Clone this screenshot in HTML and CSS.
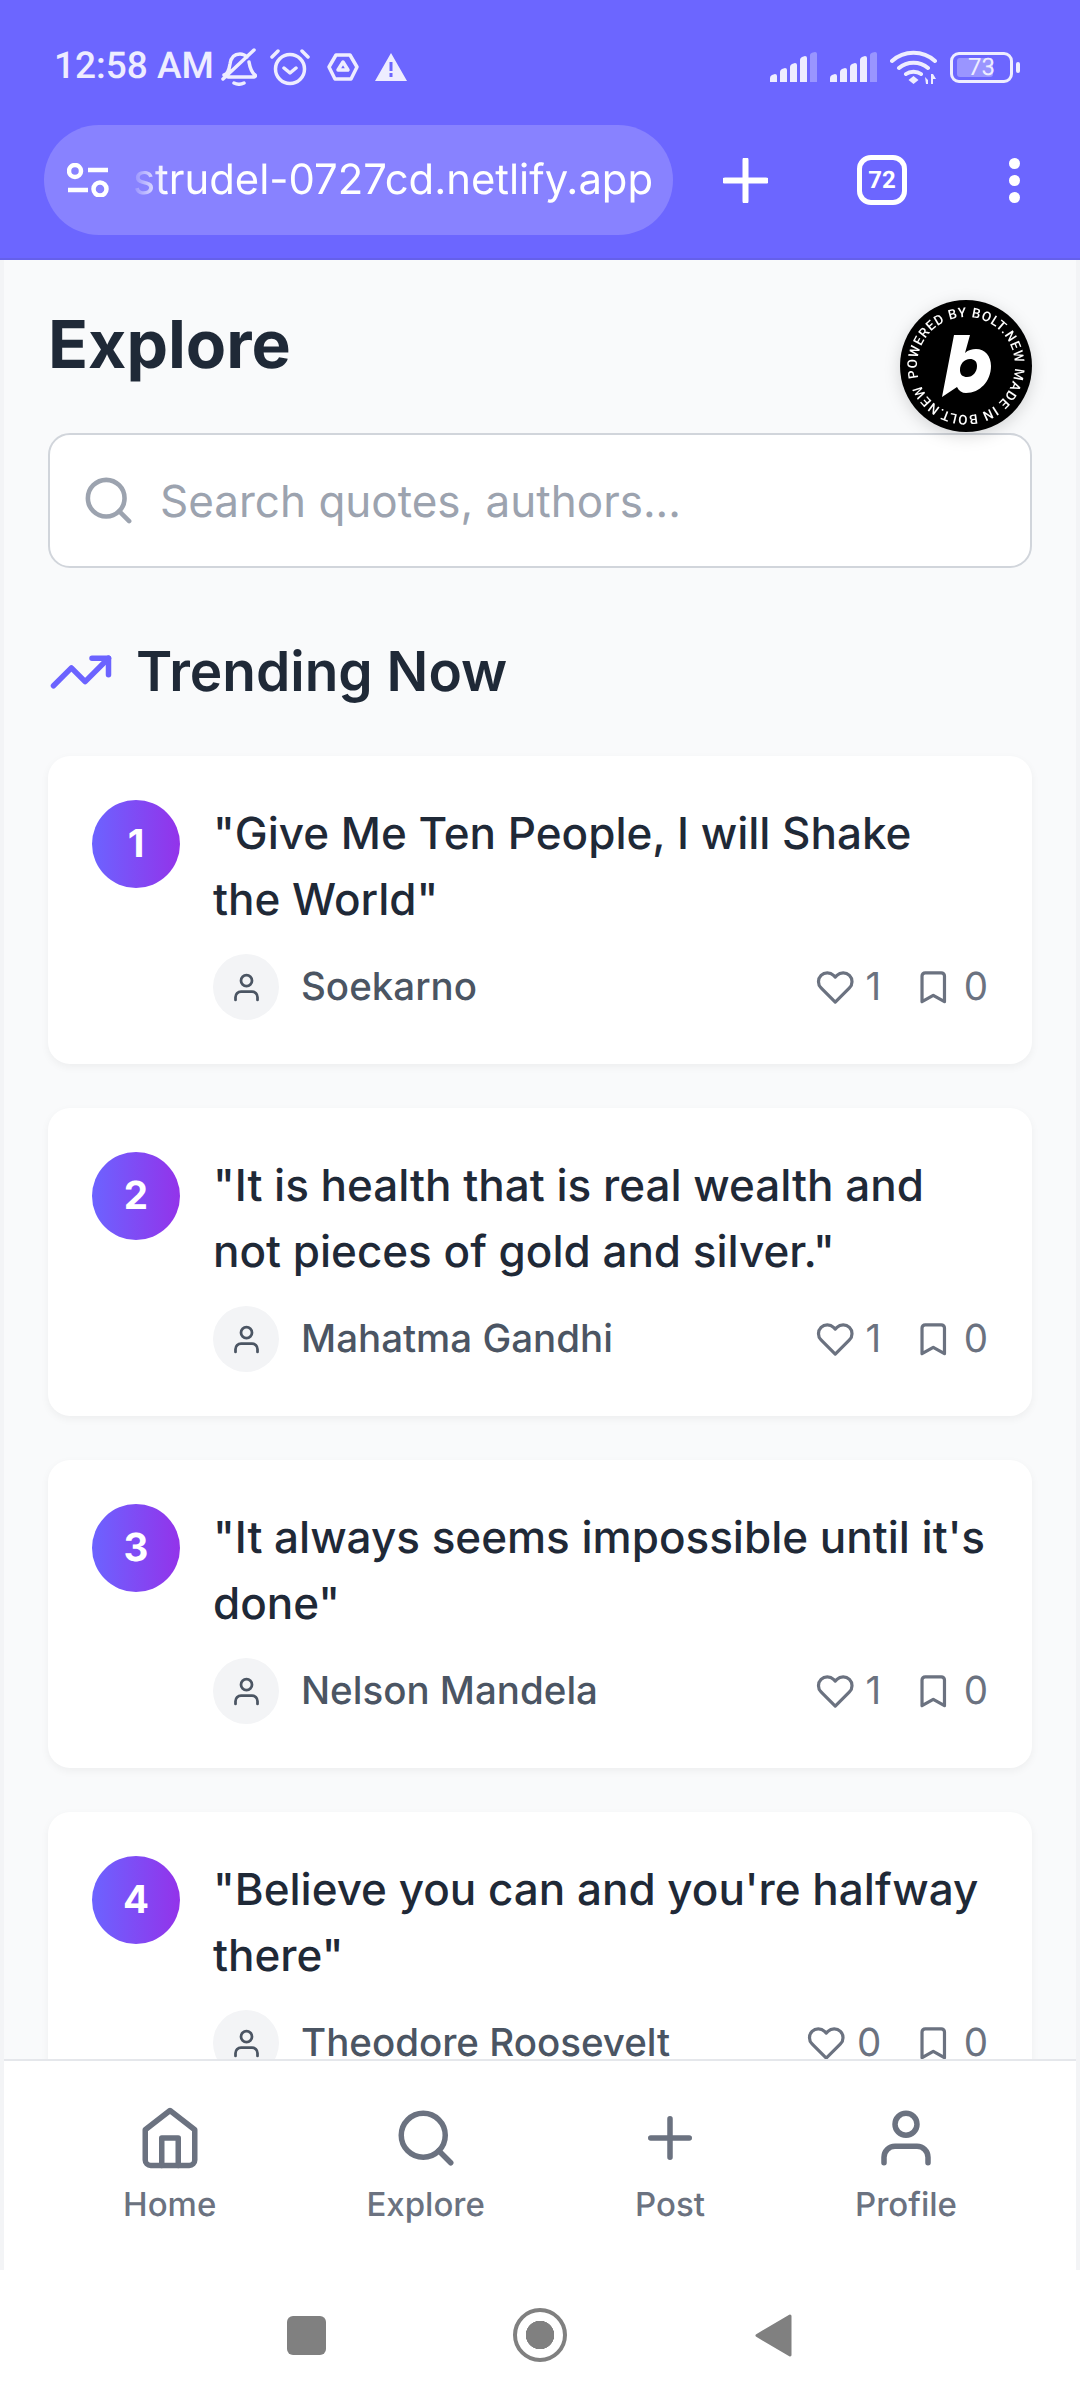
FILE: index.html
```html
<!DOCTYPE html>
<html lang="en">
<head>
<meta charset="utf-8">
<title>Explore</title>
<link rel="stylesheet" href="styles.css">
</head>
<body>
<svg class="defs" width="0" height="0" aria-hidden="true">
  <symbol id="i-heart" viewBox="0 0 24 24"><path d="M20.84 4.61a5.5 5.5 0 0 0-7.78 0L12 5.67l-1.06-1.06a5.5 5.5 0 0 0-7.78 7.78l1.06 1.06L12 21.23l7.78-7.78 1.06-1.06a5.5 5.5 0 0 0 0-7.78z"/></symbol>
  <symbol id="i-bookmark" viewBox="0 0 24 24"><path d="m19 21-7-4-7 4V5a2 2 0 0 1 2-2h10a2 2 0 0 1 2 2v16z"/></symbol>
  <symbol id="i-user" viewBox="0 0 24 24"><path d="M20 21v-2a4 4 0 0 0-4-4H8a4 4 0 0 0-4 4v2"/><circle cx="12" cy="7" r="4"/></symbol>
  <symbol id="i-search" viewBox="0 0 24 24"><circle cx="11" cy="11" r="8"/><path d="m21 21-4.35-4.35"/></symbol>
  <symbol id="i-home" viewBox="0 0 24 24"><path d="m3 9 9-7 9 7v11a2 2 0 0 1-2 2H5a2 2 0 0 1-2-2z"/><path d="M9 22V12h6v10"/></symbol>
  <symbol id="i-plus" viewBox="0 0 24 24"><path d="M12 5v14M5 12h14"/></symbol>
  <symbol id="i-trend" viewBox="0 0 24 24"><path d="M22 7 13.500 15.500l-5-5L2 17"/><path d="M16 7h6v6"/></symbol>
  <symbol id="i-signal" viewBox="0 0 47 30"><path fill="currentColor" d="M0 30V26q0-2 2-3l3-1q2 0 2 2v6zM10 30V20q0-2 2-3l3-1q2 0 2 2v12zM20 30V15q0-2 2-3l3-1q2 0 2 2v17zM30 30V8q0-2 2-3l3-1q2 0 2 2v24z"/><path fill="currentColor" opacity=".35" d="M40 30V3q0-1.500 2-2.300l3-.7q2 0 2 2v28z"/></symbol>
</svg>

<div class="phone">
  <header class="chrome">
    <div class="status">
      <div class="status-left">
        <span class="time">12:58 AM</span>
        <svg class="st st-bell" viewBox="0 0 36 38"><path d="M3 27c4-1 5-5 6-11 1-7 5-10 10-10 3 0 5 1 7 3M28 14c1 6 2 10 6 13 1 1 0 2-1 2H7M13 35c3 1.500 7 1.500 10 0M2 31 33 2"/></svg>
        <svg class="st st-alarm" viewBox="0 0 40 38"><circle cx="20" cy="21" r="14.500"/><path d="m14 20 6 5 6-5M2 9l6-6M38 9l-6-6"/></svg>
        <svg class="st st-drive" viewBox="0 0 32 28"><path d="M9 2h14l7 12-6 12H8L2 14z"/><path d="M16 9l5 8H11z"/></svg>
        <svg class="st st-warn" viewBox="0 0 32 28"><path fill="currentColor" fill-rule="evenodd" stroke="none" d="M16 0 32 28H0zM14.500 9v9h3V9zM14.500 20v4h3v-4z"/></svg>
      </div>
      <div class="status-right">
        <svg class="st-signal"><use href="#i-signal"/></svg>
        <svg class="st-signal"><use href="#i-signal"/></svg>
        <svg class="st st-wifi" viewBox="0 0 47 34"><path d="M2 11c12-11 31-11 43 0M9 18c8-7 21-7 29 0M16 24c4-3 11-3 15 0"/><path fill="currentColor" stroke="none" d="m23.500 26 5 4-5 4-5-4zM35 27l3 3v4h-2zM41 24h2l3 5h-3v5h-2z"/></svg>
        <div class="battery"><div class="batt-body"><span class="batt-fill"></span><span class="batt-num">73</span></div><span class="batt-cap"></span></div>
      </div>
    </div>
    <div class="toolbar">
      <div class="pill">
        <svg class="tune" viewBox="0 0 42 34"><circle cx="8" cy="8" r="6"/><path d="M21 7h20M1 27h20"/><circle cx="33" cy="26" r="6.500"/></svg>
        <div class="url-clip"><span class="url">strudel-0727cd.netlify.app</span></div>
      </div>
      <svg class="tb-plus" viewBox="0 0 45 45"><path d="M22.500 2v41M2 22.500h41"/></svg>
      <div class="tabs"><span>72</span></div>
      <div class="dots"><i></i><i></i><i></i></div>
    </div>
  </header>

  <div class="frame">
    <main class="content">
      <h1 class="title">Explore</h1>
      <div class="search">
        <svg class="ico search-ico"><use href="#i-search"/></svg>
        <span class="placeholder">Search quotes, authors...</span>
      </div>
      <h2 class="section"><svg class="ico trend-ico"><use href="#i-trend"/></svg>Trending Now</h2>
      <div class="list">
        <article class="card">
          <div class="rank">1</div>
          <div class="body">
            <p class="quote">"Give Me Ten People, I will Shake the World"</p>
            <div class="meta">
              <div class="author"><span class="avatar"><svg class="ico user-ico"><use href="#i-user"/></svg></span><span class="name">Soekarno</span></div>
              <div class="stats"><span class="stat"><svg class="ico stat-ico"><use href="#i-heart"/></svg>1</span><span class="stat"><svg class="ico stat-ico"><use href="#i-bookmark"/></svg>0</span></div>
            </div>
          </div>
        </article>
        <article class="card">
          <div class="rank">2</div>
          <div class="body">
            <p class="quote">"It is health that is real wealth and not pieces of gold and silver."</p>
            <div class="meta">
              <div class="author"><span class="avatar"><svg class="ico user-ico"><use href="#i-user"/></svg></span><span class="name">Mahatma Gandhi</span></div>
              <div class="stats"><span class="stat"><svg class="ico stat-ico"><use href="#i-heart"/></svg>1</span><span class="stat"><svg class="ico stat-ico"><use href="#i-bookmark"/></svg>0</span></div>
            </div>
          </div>
        </article>
        <article class="card">
          <div class="rank">3</div>
          <div class="body">
            <p class="quote">"It always seems impossible until it's done"</p>
            <div class="meta">
              <div class="author"><span class="avatar"><svg class="ico user-ico"><use href="#i-user"/></svg></span><span class="name">Nelson Mandela</span></div>
              <div class="stats"><span class="stat"><svg class="ico stat-ico"><use href="#i-heart"/></svg>1</span><span class="stat"><svg class="ico stat-ico"><use href="#i-bookmark"/></svg>0</span></div>
            </div>
          </div>
        </article>
        <article class="card">
          <div class="rank">4</div>
          <div class="body">
            <p class="quote">"Believe you can and you're halfway there"</p>
            <div class="meta">
              <div class="author"><span class="avatar"><svg class="ico user-ico"><use href="#i-user"/></svg></span><span class="name">Theodore Roosevelt</span></div>
              <div class="stats"><span class="stat"><svg class="ico stat-ico"><use href="#i-heart"/></svg>0</span><span class="stat"><svg class="ico stat-ico"><use href="#i-bookmark"/></svg>0</span></div>
            </div>
          </div>
        </article>
      </div>
    </main>
    <nav class="tabbar">
      <div class="tab"><svg class="ico tab-ico"><use href="#i-home"/></svg><span>Home</span></div>
      <div class="tab"><svg class="ico tab-ico"><use href="#i-search"/></svg><span>Explore</span></div>
      <div class="tab"><svg class="ico tab-ico"><use href="#i-plus"/></svg><span>Post</span></div>
      <div class="tab"><svg class="ico tab-ico"><use href="#i-user"/></svg><span>Profile</span></div>
    </nav>
    <svg class="badge" viewBox="0 0 132 132">
      <defs><path id="ring" d="M17 66a49 49 0 1 1 98 0a49 49 0 1 1-98 0" transform="rotate(-14 66 66)"/></defs>
      <circle cx="66" cy="66" r="66" fill="#000"/>
      <text class="badge-text"><textPath href="#ring" textLength="300">POWERED BY BOLT.NEW MADE IN BOLT.NEW</textPath></text>
      <path class="badge-b" fill-rule="evenodd" d="M54 35H70L65 53C68 50 72 49 76 49C85 49 91 56 91 66C91 81 80 93 66 93C62 93 59 91 57 87L42 97ZM70 59C64 59 60 64 60 70C60 75 63 77 67 77C73 77 77 72 77 66C77 61 74 59 70 59Z"/>
    </svg>
  </div>

  <footer class="sysnav">
    <span class="sys-square"></span>
    <span class="sys-home"></span>
    <svg class="sys-back" viewBox="0 0 38 45"><path d="M36 3 3 22.500 36 42z"/></svg>
  </footer>
</div>
</body>
</html>
```

FILE: styles.css
```css
* { box-sizing: border-box; }
html, body { margin: 0; padding: 0; }
body { width: 1080px; height: 2400px; overflow: hidden; background: #fff; font-family: Inter, "Liberation Sans", sans-serif; text-rendering: geometricPrecision; -webkit-font-smoothing: antialiased; }
.defs { position: absolute; }
.phone { width: 1080px; height: 2400px; display: flex; flex-direction: column; }

.chrome { height: 260px; flex: none; background: #6c66ff; border-bottom: 2px solid #6560ea; color: #fff; }
.status { height: 125px; padding: 48px 60px 0 54px; display: flex; justify-content: space-between; align-items: flex-start; color: #eeedff; }
.status-left, .status-right { display: flex; align-items: center; height: 38px; }
.time { font: 500 37px/38px Roboto, sans-serif; width: 167px; white-space: nowrap; }
.st { fill: none; stroke: currentColor; stroke-width: 3.5; stroke-linecap: round; stroke-linejoin: round; }
.st-bell { width: 36px; height: 38px; }
.st-alarm { width: 40px; height: 38px; margin-left: 13px; }
.st-drive { width: 32px; height: 28px; margin-left: 17px; }
.st-warn { width: 32px; height: 28px; margin-left: 16px; }
.st-signal { width: 47px; height: 30px; margin-right: 13px; color: #eeedff; }
.st-wifi { width: 47px; height: 34px; margin-right: 13px; stroke-width: 4; }
.battery { display: flex; align-items: center; gap: 3px; }
.batt-body { position: relative; width: 63px; height: 31px; border: 3px solid #eeedff; border-radius: 9px; display: flex; align-items: center; justify-content: center; }
.batt-fill { position: absolute; left: 4px; top: 3px; bottom: 3px; width: 36px; border-radius: 3px; background: #9a95ff; }
.batt-num { position: relative; font: 400 24px/1 Roboto, sans-serif; }
.batt-cap { width: 4px; height: 11px; background: #eeedff; border-radius: 2px; }

.toolbar { display: flex; align-items: center; height: 110px; padding-left: 44px; }
.pill { width: 629px; height: 110px; border-radius: 55px; background: #8882ff; display: flex; align-items: center; padding-left: 23px; }
.tune { width: 42px; height: 34px; flex: none; fill: none; stroke: #fff; stroke-width: 4.5; }
.url-clip { width: 540px; margin-left: 20px; padding-left: 4px; overflow: hidden; -webkit-mask-image: linear-gradient(to right, transparent 0, #000 36px); mask-image: linear-gradient(to right, transparent 0, #000 36px); }
.url { display: block; font: 400 41.8px/60px Inter, sans-serif; color: #fff; white-space: nowrap; }
.tb-plus { width: 45px; height: 45px; margin-left: 50px; flex: none; fill: none; stroke: #fff; stroke-width: 6; stroke-linecap: round; }
.tabs { width: 50px; height: 50px; margin-left: 89px; border: 5px solid #fff; border-radius: 14px; display: flex; align-items: center; justify-content: center; color: #fff; font: 700 24px/1 Roboto, sans-serif; }
.dots { margin-left: 102px; display: flex; flex-direction: column; gap: 6px; }
.dots i { display: block; width: 11px; height: 11px; border-radius: 50%; background: #fff; }

.frame { position: relative; flex: 1; min-height: 0; display: flex; flex-direction: column; background: #f3f4f6; padding: 0 4px; }
.content { flex: 1; min-height: 0; overflow: hidden; background: #f9fafb; padding: 40px 44px 0; }
.title { margin: 0; font-size: 66px; line-height: 88px; font-weight: 700; color: #1f2937; }
.search { margin-top: 45px; height: 135px; border: 2px solid #d1d5db; border-radius: 22px; background: #fff; display: flex; align-items: center; padding-left: 31px; }
.ico { fill: none; stroke: currentColor; stroke-linecap: round; stroke-linejoin: round; stroke-width: 2; flex: none; }
.search-ico { width: 55px; height: 55px; color: #9ca3af; }
.placeholder { margin-left: 24px; font-size: 44px; color: #9ca3af; }
.section { margin: 71px 0 51px; display: flex; align-items: center; gap: 22px; font-size: 55px; line-height: 60px; font-weight: 600; color: #1f2937; }
.trend-ico { width: 66px; height: 66px; color: #6c63ff; }
.list { display: flex; flex-direction: column; gap: 44px; }
.card { flex: none; height: 308px; padding: 44px; background: #fff; border-radius: 22px; box-shadow: 0 3px 8px rgba(0,0,0,.05); display: flex; gap: 33px; }
.rank { flex: none; width: 88px; height: 88px; border-radius: 50%; background: linear-gradient(to right, #6c63ff, #9333ea); color: #fff; font-size: 38.5px; font-weight: 700; display: flex; align-items: center; justify-content: center; }
.body { flex: 1; min-width: 0; }
.quote { margin: 0 0 22px; font-size: 44px; line-height: 66px; font-weight: 500; color: #1f2937; }
.meta { display: flex; justify-content: space-between; align-items: center; height: 66px; }
.author { display: flex; align-items: center; gap: 22px; }
.avatar { width: 66px; height: 66px; border-radius: 50%; background: #f3f4f6; display: flex; align-items: center; justify-content: center; }
.user-ico { width: 33px; height: 33px; color: #4b5563; }
.name { font-size: 38.5px; font-weight: 500; color: #4b5563; }
.stats { display: flex; gap: 33px; }
.stat { display: flex; align-items: center; gap: 11px; font-size: 38.5px; color: #6b7280; }
.stat-ico { width: 38.5px; height: 38.5px; }

.tabbar { position: relative; flex: none; height: 211px; background: #fff; border-top: 2px solid #e5e7eb; display: flex; justify-content: space-around; padding: 44px 44px 0; }
.tab { display: flex; flex-direction: column; align-items: center; gap: 11px; color: #6b7280; font-size: 33px; line-height: 44px; font-weight: 500; }
.tab-ico { width: 66px; height: 66px; }

.badge { position: absolute; left: 900px; top: 40px; width: 132px; height: 132px; filter: drop-shadow(0 4px 8px rgba(0,0,0,.15)); }
.badge-text { font: 500 13.4px Roboto, sans-serif; fill: #fff; }
.badge-b { fill: #fff; }

.sysnav { flex: none; height: 130px; background: #fff; display: flex; align-items: center; justify-content: center; padding-right: 2px; }
.sys-square { width: 39px; height: 39px; border-radius: 6px; background: #808080; }
.sys-home { width: 54px; height: 54px; margin-left: 187px; border-radius: 50%; border: 4px solid #808080; background: radial-gradient(circle, #808080 14px, #fff 14.5px); }
.sys-back { width: 38px; height: 45px; margin-left: 187px; fill: #808080; stroke: #808080; stroke-width: 3; stroke-linejoin: round; }
```
